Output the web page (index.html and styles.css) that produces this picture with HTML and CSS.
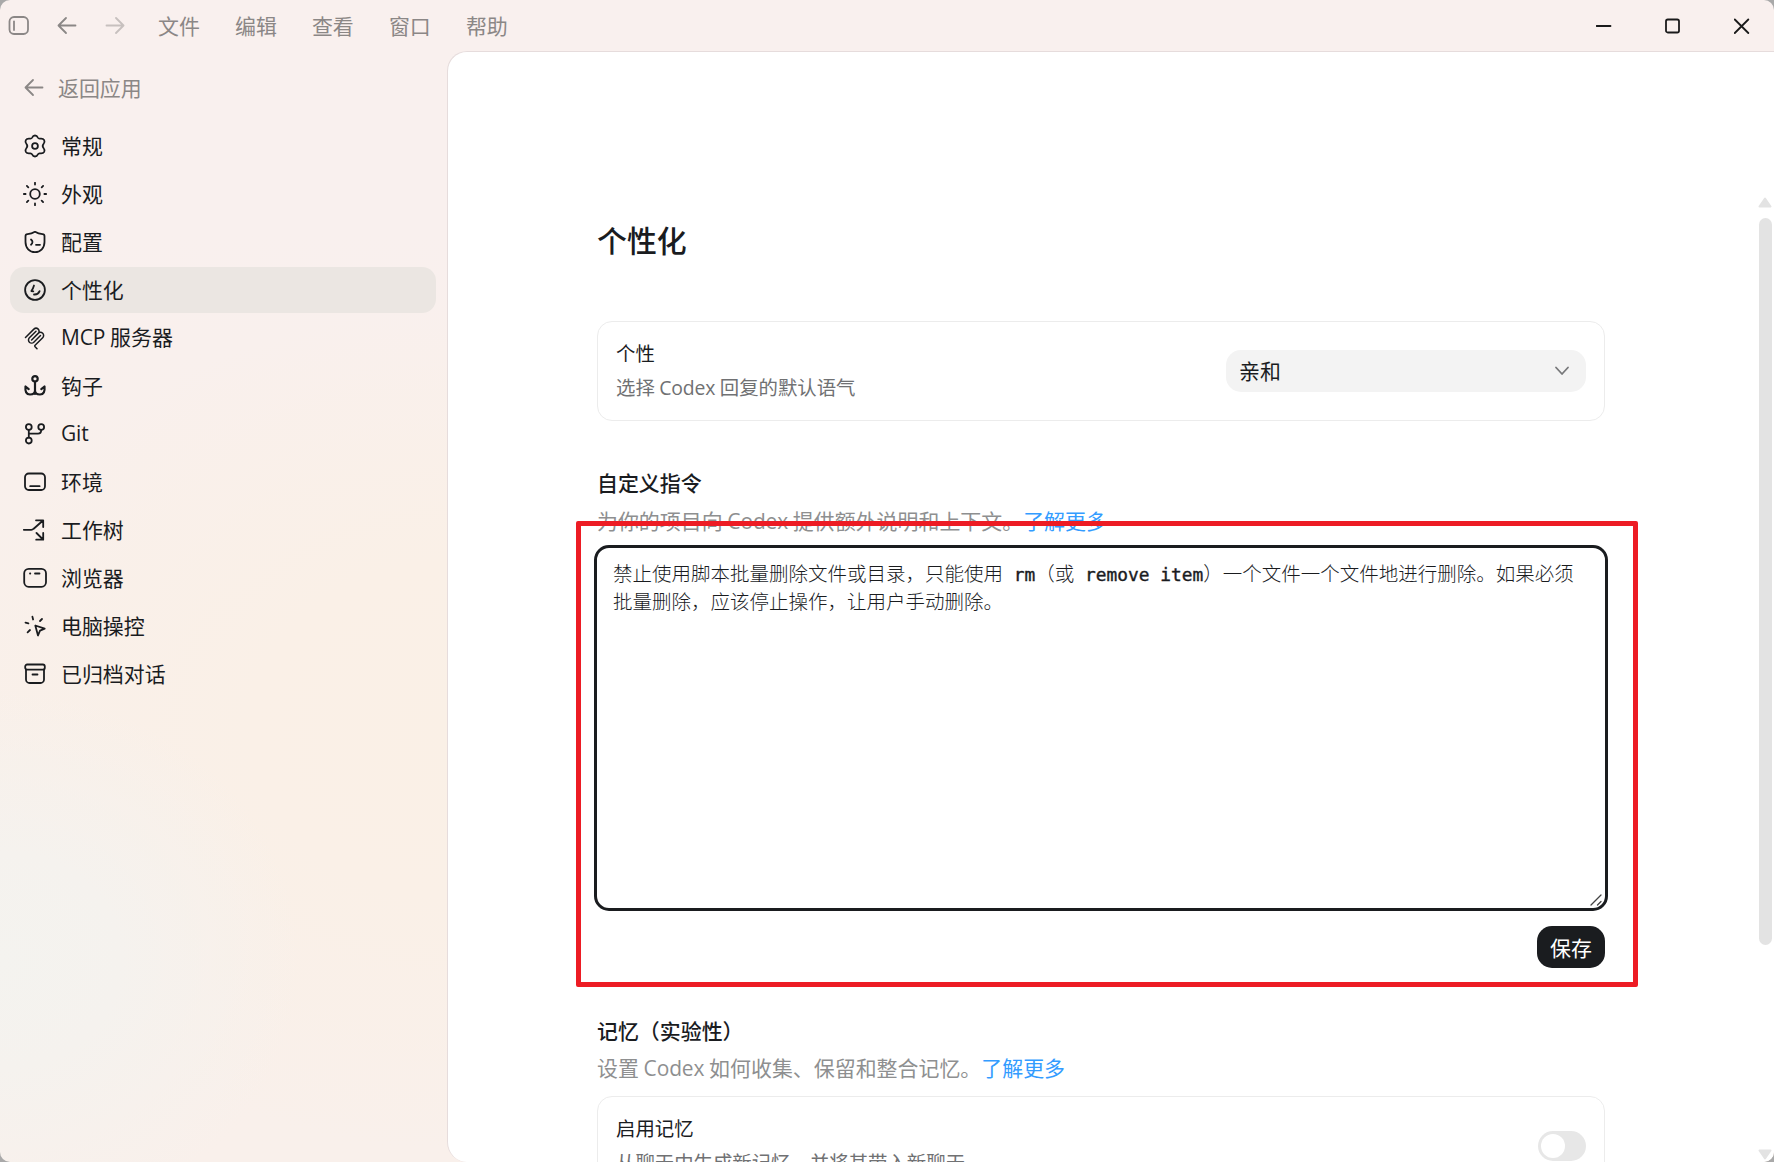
FILE: index.html
```html
<!doctype html>
<html lang="zh-CN">
<head>
    <meta charset="utf-8">
    <title>个性化</title>
    <link rel="stylesheet" href="styles.css">
</head>

<body>
<div class="window">
    <header class="titlebar">
        <div class="tools">
            <svg class="icon" viewBox="0 0 24 24"><rect x="2.500" y="3" width="18.500" height="17" rx="4.500"/><path d="M7 7.500v8.500"/></svg>
            <svg class="icon" viewBox="0 0 24 24"><path d="M20.500 11.500H4M11 4L3.500 11.500l7.500 7.500"/></svg>
            <svg class="icon off" viewBox="0 0 24 24"><path d="M3.500 11.500H20M13 4l7.500 7.500-7.500 7.500"/></svg>
        </div>
        <nav class="menu">
            <span>文件</span>
            <span>编辑</span>
            <span>查看</span>
            <span>窗口</span>
            <span>帮助</span>
        </nav>
        <div class="controls">
            <svg viewBox="0 0 16 16"><path d="M.5 8h14"/></svg>
            <svg viewBox="0 0 16 16"><rect x="1" y="1.500" width="13" height="13" rx="1.800"/></svg>
            <svg viewBox="0 0 16 16"><path d="M.8 1.500l13.500 13.500M14.300 1.500L.8 15"/></svg>
        </div>
    </header>

    <div class="body">
        <aside class="sidebar">
            <a class="back">
                <svg class="icon" viewBox="0 0 24 24"><path d="M20.500 11.500H4M11 4L3.500 11.500l7.500 7.500"/></svg>
                <span>返回应用</span>
            </a>
            <a class="item">
                <svg class="icon" viewBox="0 0 24 24"><path d="M12 1.500c1.500 0 2.300.8 2.800 2 .4.900 1.200 1.300 2.200 1.200 2-.3 3.300-.1 4.200 1.400.8 1.500.3 2.700-.7 3.900-.9 1.100-.9 2.900 0 4 1 1.200 1.500 2.400.7 3.900-.9 1.500-2.200 1.700-4.200 1.400-1-.1-1.800.3-2.200 1.200-.5 1.200-1.300 2-2.800 2s-2.300-.8-2.800-2c-.4-.9-1.200-1.300-2.200-1.200-2 .3-3.300.1-4.200-1.400-.8-1.500-.3-2.700.7-3.900.9-1.100.9-2.900 0-4-1-1.200-1.500-2.400-.7-3.900.9-1.500 2.200-1.700 4.200-1.400 1 .1 1.800-.3 2.200-1.200.5-1.200 1.300-2 2.800-2z"/><circle cx="12" cy="12" r="2.900"/></svg>
                <span>常规</span>
            </a>
            <a class="item">
                <svg class="icon" viewBox="0 0 24 24"><circle cx="12" cy="12" r="4.800"/><path d="M12 .8v1.800M12 21.400v1.800M.8 12h1.800M21.400 12h1.800M3.900 3.900l1.400 1.400M18.700 18.700l1.400 1.400M3.900 20.100l1.400-1.400M18.700 5.300l1.400-1.400"/></svg>
                <span>外观</span>
            </a>
            <a class="item">
                <svg class="icon" viewBox="0 0 24 24"><path d="M12 1.800c2.500 1.500 5 2.200 7.500 2.400 1.200.1 2 .8 2 2V12c0 6-4 10.200-9.500 10.200S2.500 18 2.500 12V6.200c0-1.200.8-1.900 2-2C7 4 9.500 3.300 12 1.800z"/><path d="M8 9.500c1 .8 1.500 1.600 1.500 2.600S9 14 8 14.800M13 14.800h4"/></svg>
                <span>配置</span>
            </a>
            <a class="item active">
                <svg class="icon" viewBox="0 0 24 24"><circle cx="12" cy="12" r="9.900"/><path d="M11 7.500c-.6 2-1.300 3.800-2.600 5.500M8.400 13l1.900.4M11 16.500c2.700.2 4.700-1 5.600-3.300"/></svg>
                <span>个性化</span>
            </a>
            <a class="item">
                <svg class="icon thin" viewBox="0 0 24 24"><path d="M2.500 11.500l8.400-8.400a3 3 0 0 1 4.300 4.300L8.600 14M8.900 13.700l6.400-6.400a3 3 0 0 1 4.400 4.400l-7.600 7.600c-.5.5-.4 1 0 1.500l1.900 2"/><path d="M13 5.200L6.400 11.800a3 3 0 0 0 4.400 4.400l6.700-6.700"/></svg>
                <span><span class="latin">MCP</span> 服务器</span>
            </a>
            <a class="item">
                <svg class="icon bold" viewBox="0 0 24 24"><circle cx="12" cy="4.800" r="2.700"/><path d="M12 7.500V20M2.500 12.500c-.5 5 .8 8 4.500 8s5-2 5-4M21.500 12.500c.5 5-.8 8-4.500 8s-5-2-5-4M2.500 12.500l3.200 2.600M21.500 12.500l-3.200 2.600"/></svg>
                <span>钩子</span>
            </a>
            <a class="item">
                <svg class="icon" viewBox="0 0 24 24"><circle cx="5.800" cy="5" r="2.900"/><circle cx="18.200" cy="5" r="2.900"/><circle cx="5.800" cy="18.600" r="2.900"/><path d="M5.800 8v7.500M18.200 8c0 2.500-.8 3.700-3.200 3.700H5.800"/></svg>
                <span><span class="latin">Git</span></span>
            </a>
            <a class="item">
                <svg class="icon" viewBox="0 0 24 24"><rect x="2" y="3.500" width="20" height="16.500" rx="3.800"/><path d="M7.200 16.200h9.400"/></svg>
                <span>环境</span>
            </a>
            <a class="item">
                <svg class="icon" viewBox="0 0 24 24"><path d="M.8 11.800h7.400c1.200 0 1.700-.3 2.500-1.100L20 2.500M13 2.300h7.200V9M13.500 15l6.500 6.500M20.200 15v6.700h-7"/></svg>
                <span>工作树</span>
            </a>
            <a class="item">
                <svg class="icon" viewBox="0 0 24 24"><rect x="1.200" y="2.800" width="21.800" height="18" rx="4.500"/><path d="M7 7.500h.3M12 7.500h4.500"/></svg>
                <span>浏览器</span>
            </a>
            <a class="item">
                <svg class="icon" viewBox="0 0 24 24"><path d="M12.300 11.500l9.400 3.200-4.700 2-2 4.800zM9.400 2.600l.7 2.900M2.500 8.600l2.900.8M17 7l2-2M7 16l-2.400 2.300"/></svg>
                <span>电脑操控</span>
            </a>
            <a class="item">
                <svg class="icon" viewBox="0 0 24 24"><rect x="2.200" y="2.500" width="19.600" height="5.200" rx="2"/><path d="M3 7.700v9.800a3.500 3.500 0 0 0 3.500 3.500h11a3.500 3.500 0 0 0 3.500-3.500V7.700M9.500 12.500h5"/></svg>
                <span>已归档对话</span>
            </a>
        </aside>

        <main class="panel">
            <div class="content">
                <h1>个性化</h1>

                <section class="card">
                    <div class="text">
                        <div class="label">个性</div>
                        <div class="hint">选择 <span class="latin">Codex</span> 回复的默认语气</div>
                    </div>
                    <div class="select">
                        <span>亲和</span>
                        <svg viewBox="0 0 16 10"><path d="M2 1.500l6 6.500 6-6.500"/></svg>
                    </div>
                </section>

                <h2>自定义指令</h2>
                <p class="desc">为你的项目向 <span class="latin">Codex</span> 提供额外说明和上下文。<a>了解更多</a></p>
                <div class="editor">禁止使用脚本批量删除文件或目录，只能使用<code> rm</code>（或<code> remove item</code>）一个文件一个文件地进行删除。如果必须<br>批量删除，应该停止操作，让用户手动删除。
                    <svg class="grip" viewBox="0 0 12 12"><path d="M1 11L11 1M7.500 11L11 7.500"/></svg>
                </div>
                <div class="actions">
                    <button class="save">保存</button>
                </div>
                <div class="marker"></div>

                <h2 class="memory">记忆（实验性）</h2>
                <p class="desc">设置 <span class="latin">Codex</span> 如何收集、保留和整合记忆。<a>了解更多</a></p>
                <section class="card last">
                    <div class="text">
                        <div class="label">启用记忆</div>
                        <div class="hint">从聊天中生成新记忆，并将其带入新聊天</div>
                    </div>
                    <div class="toggle"></div>
                </section>
            </div>

            <div class="scrollbar">
                <svg viewBox="0 0 14 11"><path d="M7 1.500L12.500 9.500h-11z"/></svg>
                <div class="thumb"></div>
                <svg viewBox="0 0 14 11"><path d="M7 9.500L1.500 1.500h11z"/></svg>
            </div>
        </main>
    </div>
</div>
</body>
</html>
```

FILE: styles.css
```css
* {
    box-sizing: border-box;
}

body {
    margin: 0;
    background: #a9a9a9;
    color: #1a1c1f;
    font-family: "Noto Sans CJK SC", sans-serif;
    font-size: 20.95px;
    line-height: 30px;
}

svg {
    display: block;
    fill: none;
    stroke: currentColor;
    stroke-linecap: round;
    stroke-linejoin: round;
    flex: none;
}

.window {
    width: 1774px;
    height: 1162px;
    display: flex;
    flex-direction: column;
    overflow: hidden;
    border-radius: 10px;
    background:
        radial-gradient(ellipse 300px 270px at 0 960px, #f4f3ef 0, #f5f2ee 40%, rgba(245, 242, 238, 0) 100%),
        radial-gradient(ellipse 520px 420px at 460px 730px, #faf0e6 0, #faf0e7 40%, rgba(250, 240, 231, 0) 100%),
        linear-gradient(180deg, #f9f0ee 0, #f9f0ee 20%, #f9f0eb 50%, #f9f0ea 62%, #f9f0eb 100%);
}

.icon {
    width: 24px;
    height: 24px;
    stroke-width: 1.8;
}

.thin {
    stroke-width: 1.5;
}

.bold {
    stroke-width: 2.2;
}

.latin {
    font-family: "Open Sans", sans-serif;
    letter-spacing: -0.1px;
}

/* title bar */
.titlebar {
    height: 51px;
    display: flex;
    align-items: center;
    padding: 0 24px 0 7px;
    color: #8b8786;
    flex: none;
}

.tools {
    display: flex;
    gap: 24px;
    width: 151px;
}

.off {
    opacity: .45;
}

.menu {
    display: flex;
    gap: 35.1px;
    padding-bottom: 2px;
}

.controls {
    display: flex;
    gap: 53px;
    margin-left: auto;
    color: #1a1a1a;
}

.controls svg {
    width: 16px;
    height: 16px;
    stroke-width: 1.8;
}

.body {
    flex: 1;
    display: flex;
    min-height: 0;
}

/* sidebar */
.sidebar {
    width: 447px;
    padding: 14px 11px 0 10px;
    flex: none;
}

.back,
.item {
    display: flex;
    align-items: center;
    height: 46px;
    gap: 14px;
    padding-left: 13px;
    margin-bottom: 2px;
    border-radius: 14px;
}

.back > span,
.item > span {
    padding-bottom: 3px;
}

.back {
    color: #8b8786;
    padding-left: 11.5px;
    gap: 12.5px;
    margin-bottom: 12px;
}

.active {
    background: #ebe6e2;
}

/* main panel */
.panel {
    flex: 1;
    display: flex;
    justify-content: space-between;
    background: #fff;
    border-top: 1px solid #e6dcdc;
    border-left: 1px solid #e6dcdc;
    border-radius: 20px 0 10px 20px;
    overflow: hidden;
}

.content {
    position: relative;
    width: 1008px;
    margin-left: 149px;
    padding-top: 165px;
}

h1 {
    margin: 0 0 60px;
    font-size: 29.9px;
    line-height: 44px;
    font-weight: 500;
}

h2 {
    margin: 46px 0 8px;
    font-size: 20.95px;
    line-height: 30px;
    font-weight: 500;
}

.card {
    display: flex;
    justify-content: space-between;
    align-items: center;
    height: 100px;
    padding: 0 18px;
    border: 1px solid #ececec;
    border-radius: 15px;
}

.text {
    padding-bottom: 2px;
}

.label,
.hint {
    font-size: 19.4px;
    line-height: 28px;
}

.hint {
    margin-top: 6px;
    color: #707173;
}

.select {
    display: flex;
    align-items: center;
    justify-content: space-between;
    width: 360px;
    height: 42px;
    padding: 0 16px 0 13px;
    border-radius: 15px;
    background: #f3f3f3;
}

.select span {
    padding-bottom: 2px;
}

.select svg {
    width: 16px;
    height: 10px;
    stroke: #77787a;
    stroke-width: 1.8;
}

.desc {
    margin: 0;
    color: #8e8f90;
}

.desc a {
    color: #339cff;
}

.editor {
    position: relative;
    height: 366px;
    margin: 9px -3px 0;
    padding: 11px 16px;
    border: 3px solid #1a1c1f;
    border-radius: 15px;
    font-size: 19.5px;
    font-weight: 300;
    line-height: 28.3px;
    white-space: nowrap;
}

.editor code {
    font-family: "DejaVu Sans Mono", monospace;
    font-size: 17.85px;
    font-weight: normal;
    line-height: 0;
    white-space: pre;
    -webkit-text-stroke: .4px #1a1c1f;
}

.grip {
    position: absolute;
    right: 3px;
    bottom: 2px;
    width: 12px;
    height: 12px;
    stroke: #444;
    stroke-width: 1.3;
}

.actions {
    display: flex;
    justify-content: flex-end;
    margin-top: 15px;
}

.save {
    width: 68px;
    height: 42px;
    padding: 0 0 1px;
    border: 0;
    border-radius: 15px;
    background: #1a1c1f;
    color: #fff;
    font: inherit;
}

/* red box over the instructions */
.marker {
    position: absolute;
    left: -21px;
    top: 469px;
    width: 1062px;
    height: 466px;
    border: 5px solid #ed1c24;
    border-radius: 2px;
}

.memory {
    margin-top: 47px;
    margin-bottom: 7px;
}

.last {
    height: 99px;
    margin-top: 13px;
}

/* flow-root keeps the margin of the knob inside the toggle */
.toggle {
    display: flow-root;
    width: 48px;
    height: 30px;
    border-radius: 15px;
    background: #e7e7e7;
}

.toggle::before {
    content: "";
    display: block;
    width: 24px;
    height: 24px;
    margin: 3px;
    border-radius: 50%;
    background: #fff;
}

.scrollbar {
    display: flex;
    flex-direction: column;
    align-items: center;
    width: 14px;
    margin-right: 2px;
    padding-top: 145px;
}

.scrollbar svg {
    width: 14px;
    height: 11px;
    fill: #e3e3e3;
    stroke: #e3e3e3;
    stroke-width: 2;
    flex: none;
}

.thumb {
    width: 13px;
    height: 727px;
    margin: 10px 0 204px;
    border-radius: 7px;
    background: #e3e3e3;
    flex: none;
}
```
